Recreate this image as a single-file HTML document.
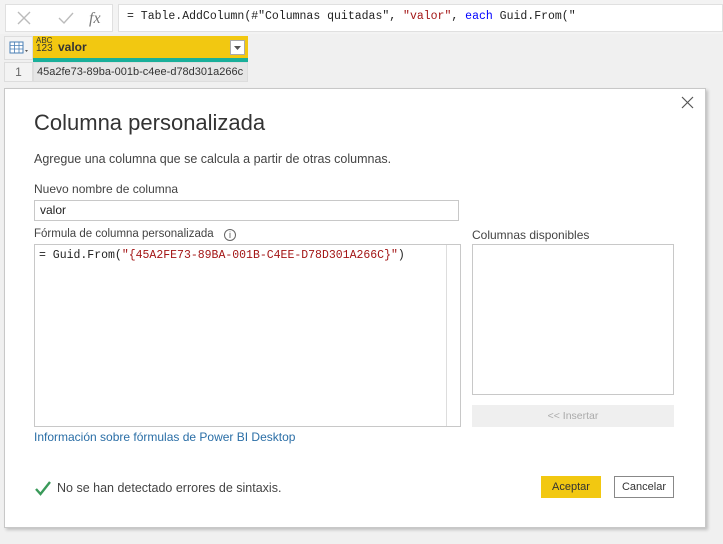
<!DOCTYPE html>
<html><head><meta charset="utf-8"><style>
*{margin:0;padding:0;box-sizing:border-box}
body{width:723px;height:544px;background:#f0f0f0;font-family:"Liberation Sans",sans-serif;position:relative;overflow:hidden;color:#333}
.a{position:absolute;white-space:nowrap}
.mono{font-family:"Liberation Mono",monospace}
</style></head><body>
<div class="a" style="left:0;top:0;width:723px;height:34px;background:#f3f3f3"></div>
<div class="a" style="left:5px;top:4px;width:108px;height:28px;background:#fff;border:1px solid #e0e0e0"></div>
<svg class="a" style="left:15px;top:9px" width="90" height="18"><path d="M3 3L15 15M15 3L3 15" stroke="#bbb" stroke-width="1.4"/><path d="M44 9L49 14L58 4" stroke="#bbb" stroke-width="1.4" fill="none"/><text x="74" y="14" font-family="Liberation Serif" font-style="italic" font-size="16" fill="#777">fx</text></svg>
<div class="a" style="left:118px;top:4px;width:605px;height:28px;background:#fff;border:1px solid #e0e0e0"></div>
<div class="a mono" style="left:127px;top:10px;font-size:11.5px;color:#222;white-space:pre">= Table.AddColumn(#"Columnas quitadas", <span style="color:#a31515">"valor"</span>, <span style="color:#00f">each</span> Guid.From("</div>
<div class="a" style="left:4px;top:36px;width:29px;height:24px;background:#f3f3f3;border:1px solid #ddd"></div>
<svg class="a" style="left:9px;top:41px" width="22" height="14"><rect x="1" y="1" width="13" height="11" fill="#fff" stroke="#4a7fb5"/><path d="M1 4.5H14M1 8H14M5.5 1V12M10 1V12" stroke="#4a7fb5" stroke-width="0.8"/><path d="M16 9L19 9L17.5 11Z" fill="#555"/></svg>
<div class="a" style="left:33px;top:36px;width:215px;height:22px;background:#f2c811"></div>
<div class="a" style="left:33px;top:58px;width:215px;height:4px;background:#1aaf9a"></div>
<div class="a" style="left:36px;top:37px;font-size:8px;line-height:8px;color:#333">ABC<br><span style="font-size:10px">123</span></div>
<div class="a" style="left:58px;top:40px;font-size:12px;font-weight:bold;color:#333">valor</div>
<div class="a" style="left:230px;top:40px;width:15px;height:15px;background:#fff;border:1px solid #aaa"></div>
<svg class="a" style="left:233px;top:45px" width="9" height="6"><path d="M1 1L8 1L4.5 5Z" fill="#555"/></svg>
<div class="a" style="left:4px;top:62px;width:29px;height:20px;background:#f3f3f3;border:1px solid #ddd;font-size:12px;color:#666;text-align:center;line-height:19px">1</div>
<div class="a" style="left:33px;top:62px;width:215px;height:20px;background:#e6e6e6;border:1px solid #ddd;font-size:11px;color:#333;line-height:19px;padding-left:3px;overflow:hidden">45a2fe73-89ba-001b-c4ee-d78d301a266c</div>
<div class="a" style="left:4px;top:88px;width:702px;height:440px;background:#fff;border:1px solid #c8c8c8;box-shadow:2px 2px 3px rgba(0,0,0,0.2)"></div>
<svg class="a" style="left:681px;top:96px" width="13" height="13"><path d="M1 1L12 12M12 1L1 12" stroke="#555" stroke-width="1.2"/></svg>
<div class="a" style="left:34px;top:110px;font-size:22px;color:#333">Columna personalizada</div>
<div class="a" style="left:34px;top:152px;font-size:12.5px;color:#444">Agregue una columna que se calcula a partir de otras columnas.</div>
<div class="a" style="left:34px;top:182px;font-size:12px;color:#444">Nuevo nombre de columna</div>
<div class="a" style="left:34px;top:200px;width:425px;height:21px;border:1px solid #c8c8c8;font-size:12px;line-height:19px;padding-left:5px;color:#222">valor</div>
<div class="a" style="left:34px;top:228px;font-size:11.5px;color:#444">Fórmula de columna personalizada</div>
<div class="a" style="left:224px;top:229px;width:12px;height:12px;border:1px solid #666;border-radius:50%;font-size:9px;line-height:10px;text-align:center;color:#555">i</div>
<div class="a" style="left:34px;top:244px;width:427px;height:183px;border:1px solid #c8c8c8"></div>
<div class="a" style="left:446px;top:245px;width:14px;height:181px;border-left:1px solid #ddd"></div>
<div class="a mono" style="left:39px;top:249px;font-size:11.5px;color:#222;white-space:pre">= Guid.From(<span style="color:#a31515">"{45A2FE73-89BA-001B-C4EE-D78D301A266C}"</span>)</div>
<div class="a" style="left:472px;top:228px;font-size:12px;color:#444">Columnas disponibles</div>
<div class="a" style="left:472px;top:244px;width:202px;height:151px;border:1px solid #c8c8c8"></div>
<div class="a" style="left:472px;top:405px;width:202px;height:22px;background:#efefef;font-size:10.5px;color:#aaa;text-align:center;line-height:22px">&lt;&lt; Insertar</div>
<div class="a" style="left:34px;top:430px;font-size:12px;color:#2a6ea6">Información sobre fórmulas de Power BI Desktop</div>
<svg class="a" style="left:35px;top:481px" width="16" height="15"><path d="M1 8L5.5 13L15 1" stroke="#3a9a5a" stroke-width="2.4" fill="none"/></svg>
<div class="a" style="left:57px;top:481px;font-size:12.5px;color:#444">No se han detectado errores de sintaxis.</div>
<div class="a" style="left:541px;top:476px;width:60px;height:22px;background:#f2c811;font-size:11px;text-align:center;line-height:22px;color:#333">Aceptar</div>
<div class="a" style="left:614px;top:476px;width:60px;height:22px;border:1px solid #888;background:#fff;font-size:11px;text-align:center;line-height:20px;color:#333">Cancelar</div>
</body></html>
